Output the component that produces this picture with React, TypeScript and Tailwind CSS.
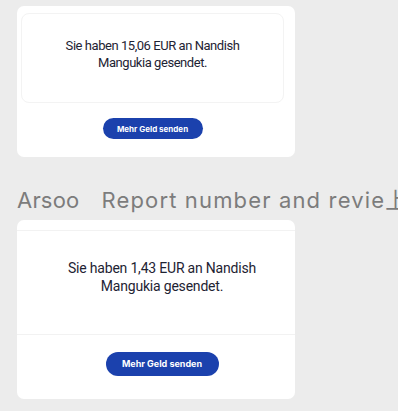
import React from 'react';

const font = { fontFamily: 'Inter, "Noto Sans CJK SC", sans-serif' };
const bodyFont = { fontFamily: 'Roboto, "Liberation Sans", sans-serif' };

// Compact confirmation card with an inner bordered box
const SmallCard = ({ amount }: { amount: string }) => (
  <div className="w-[278px] h-[151px] bg-white rounded-[7px] flex flex-col">
    <div className="mt-[7px] ml-[4px] w-[263px] h-[90px] rounded-[8px] border border-[#f3f3f3] flex justify-center pt-[23px]">
      <p style={bodyFont} className="text-[13px] leading-[17px] tracking-[-0.45px] text-[#1e2333] text-center w-[200px]">
        Sie haben {amount} EUR an Nandish Mangukia gesendet.
      </p>
    </div>
    <div className="w-[271px] flex justify-center mt-[15px]">
      <button className="w-[100px] h-[21px] rounded-full bg-[#1b41ad] text-white text-[8px] font-bold">
        Mehr Geld senden
      </button>
    </div>
  </div>
);

// Larger card with separators
const LargeCard = ({ amount }: { amount: string }) => (
  <div className="w-[278px] h-[179px] bg-white rounded-[7px] flex flex-col">
    <div className="h-[11px] border-b border-[#f2f2f2]" />
    <div className="h-[104px] border-b border-[#f2f2f2] flex justify-center pt-[28px] pl-[12px]">
      <p style={bodyFont} className="text-[14px] leading-[18px] tracking-[-0.2px] text-[#1e2333] text-center w-[220px]">
        Sie haben {amount} EUR an Nandish Mangukia gesendet.
      </p>
    </div>
    <div className="flex justify-center pt-[17px] pl-[12px]">
      <button className="w-[113px] h-[24px] rounded-full bg-[#1b41ad] text-white text-[9px] font-bold">
        Mehr Geld senden
      </button>
    </div>
  </div>
);

export default function App() {
  return (
    <div style={font} className="w-[398px] h-[411px] overflow-hidden bg-[#ececec] pt-[6px] pl-[17px] flex flex-col">
      <SmallCard amount="15,06" />
      <div className="h-[63px] flex items-end pb-[9px] whitespace-nowrap text-[22px] leading-[22px] text-[#7c7c7c]">
        <span className="tracking-[0.2px]">Arsoo</span>
        <span className="ml-[22px] tracking-[1.15px]">Report number and revie上</span>
      </div>
      <LargeCard amount="1,43" />
    </div>
  );
}
